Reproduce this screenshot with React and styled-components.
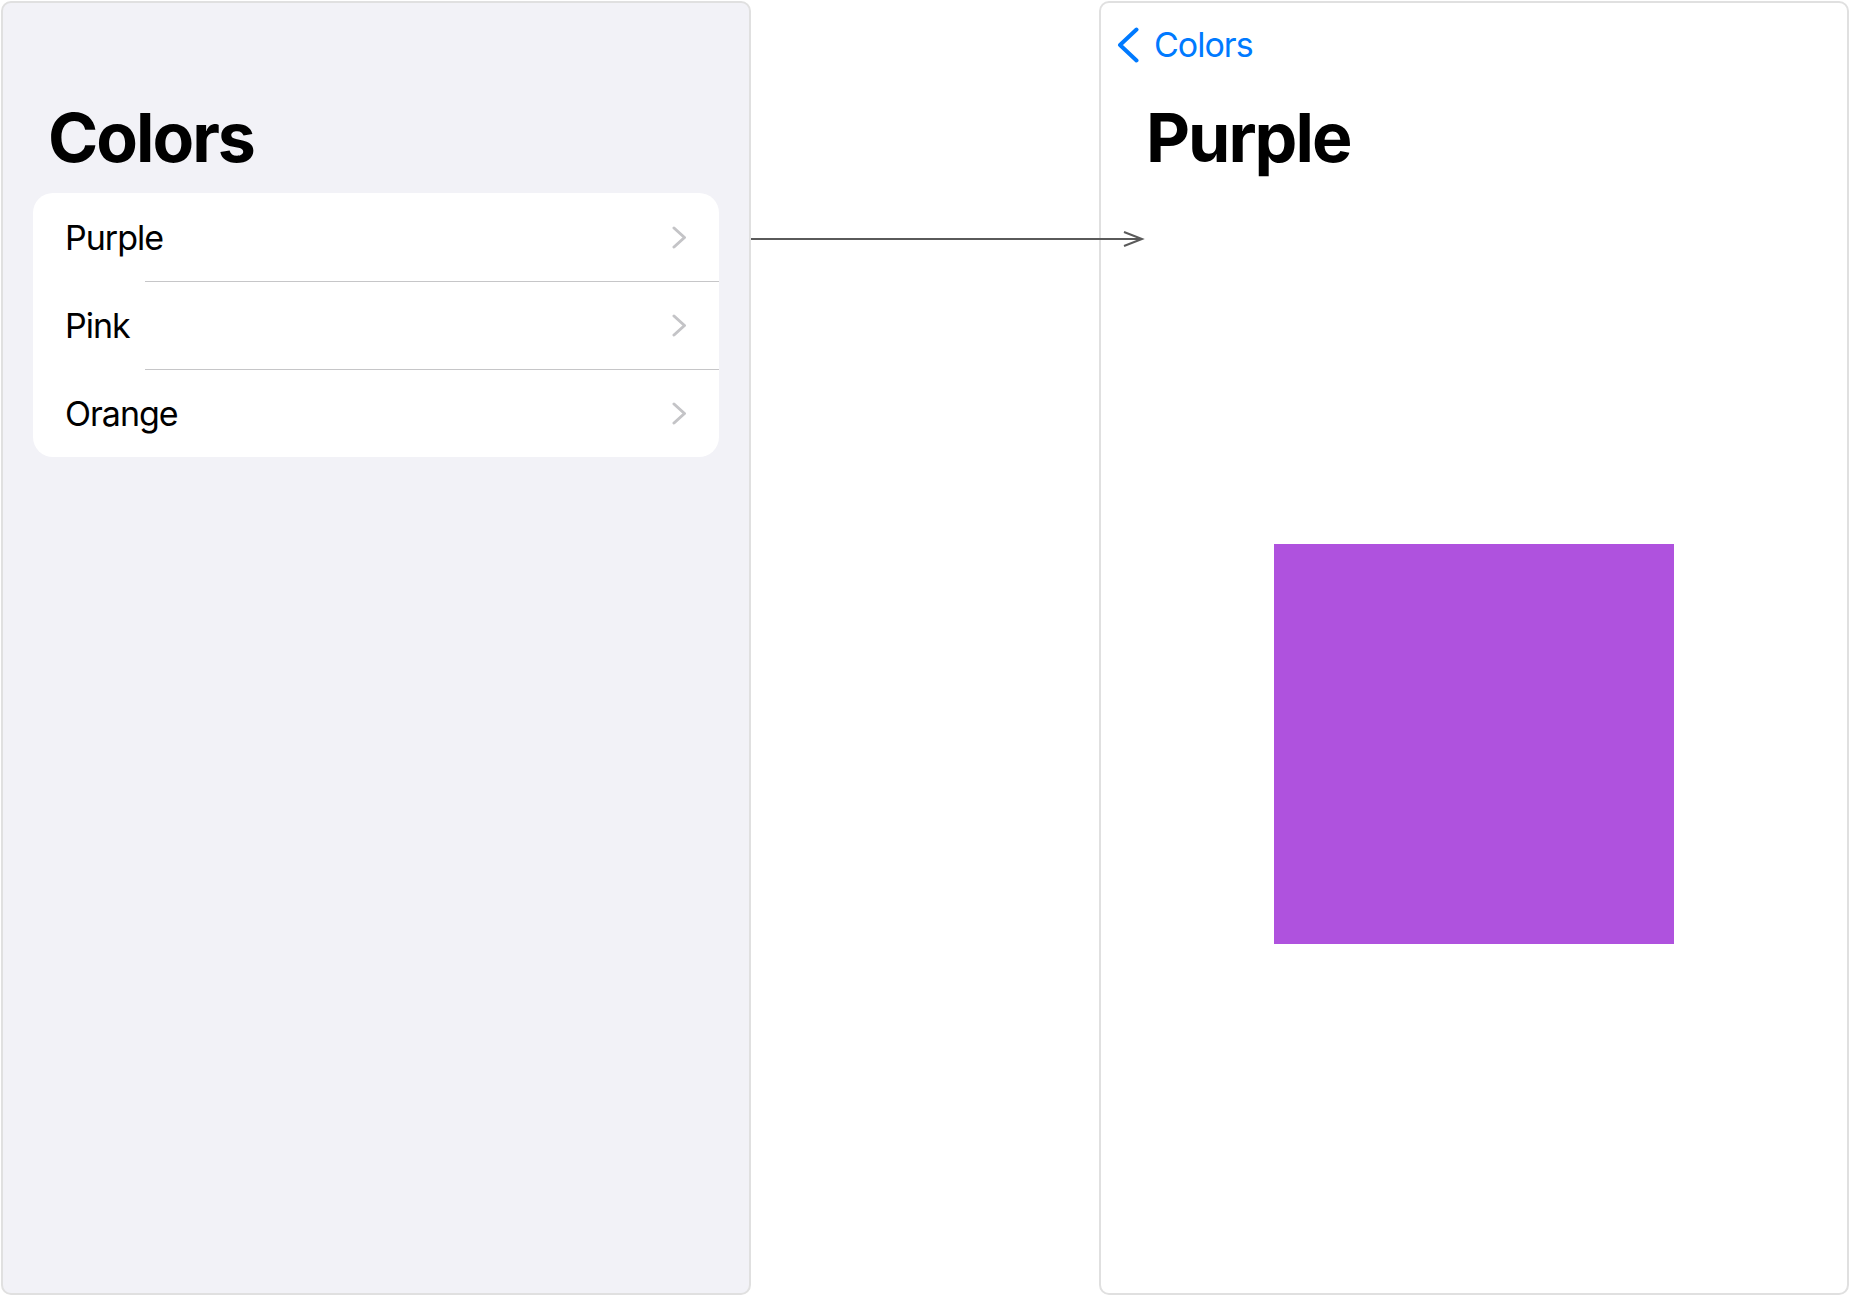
import styled, { createGlobalStyle } from "styled-components";

const GlobalStyle = createGlobalStyle`
  html, body {
    margin: 0;
    padding: 0;
    background: #ffffff;
    font-family: Inter, "Noto Sans", "Liberation Sans", sans-serif;
    -webkit-font-smoothing: antialiased;
  }
`;

const Canvas = styled.div`
  position: relative;
  display: flex;
  gap: 348px;
  padding: 1px;
  width: 1850px;
  height: 1296px;
  box-sizing: border-box;
`;

const Screen = styled.div`
  width: 750px;
  height: 1294px;
  box-sizing: border-box;
  display: flex;
  flex-direction: column;
  border: 2px solid #e0e0e0;
  border-radius: 10px;
  overflow: hidden;
  background-color: ${(p) => p.$bg || "#ffffff"};
`;

const LargeTitle = styled.h1`
  margin: ${(p) => p.$top || 0}px 0 0;
  padding-left: 45px;
  font-size: 68px;
  line-height: 82px;
  font-weight: 700;
  letter-spacing: -2px;
  color: #000000;
`;

const Card = styled.div`
  margin: 15px 30px 0;
  background: #ffffff;
  border-radius: 20px;
  display: flex;
  flex-direction: column;
  overflow: hidden;
`;

const Row = styled.div`
  height: 88px;
  display: flex;
  align-items: center;
  justify-content: space-between;
  padding: 0 32px 0 32px;
  font-size: 34px;
  letter-spacing: -1px;
  color: #000000;
  cursor: pointer;
`;

const Separator = styled.div`
  height: 1px;
  margin: 0 0 -1px 112px;
  background: #c6c6c8;
`;

const NavBar = styled.div`
  display: flex;
  align-items: center;
  gap: 15px;
  height: 36px;
  padding: 24px 0 0 16px;
  color: #007aff;
  font-size: 34px;
  line-height: 36px;
  letter-spacing: -1px;
`;

const Header = styled.div`
  padding-bottom: 17px;
`;

const Content = styled.div`
  flex: 1;
  display: flex;
  align-items: center;
  justify-content: center;
`;

const Swatch = styled.div`
  width: 400px;
  height: 400px;
  background: ${(p) => p.$color};
`;

const Connector = styled.svg`
  position: absolute;
  left: 751px;
  top: 231px;
  overflow: visible;
`;

const Chevron = () => (
  <svg width="15" height="23" viewBox="0 0 15 23">
    <path
      d="M2 2 L12.5 11.5 L2 21"
      fill="none"
      stroke="#c4c4c7"
      strokeWidth="3"
      strokeLinecap="round"
      strokeLinejoin="round"
    />
  </svg>
);

const BackChevron = () => (
  <svg width="22" height="36" viewBox="0 0 22 36">
    <path
      d="M19.5 2.5 L3 18 L19.5 33.5"
      fill="none"
      stroke="#007aff"
      strokeWidth="4"
      strokeLinecap="round"
      strokeLinejoin="round"
    />
  </svg>
);

const colors = ["Purple", "Pink", "Orange"];

const App = () => {
  return (
    <>
      <GlobalStyle />
      <Canvas>
        <Screen $bg="#f2f2f7">
          <LargeTitle $top={93}>Colors</LargeTitle>
          <Card>
            {colors.map((name, i) => (
              <div key={name}>
                {i > 0 && <Separator />}
                <Row>
                  {name}
                  <Chevron />
                </Row>
              </div>
            ))}
          </Card>
        </Screen>

        <Screen>
          <Header>
            <NavBar>
              <BackChevron />
              Colors
            </NavBar>
            <LargeTitle $top={33}>Purple</LargeTitle>
          </Header>
          <Content>
            <Swatch $color="#af52de" />
          </Content>
        </Screen>

        <Connector width="392" height="16" viewBox="0 0 392 16">
          <path d="M0 8 H390" stroke="#5a5a5a" strokeWidth="2" fill="none" />
          <path d="M373 1 L391 8 L373 15" stroke="#5a5a5a" strokeWidth="2" fill="none" />
        </Connector>
      </Canvas>
    </>
  );
};

export default App;
